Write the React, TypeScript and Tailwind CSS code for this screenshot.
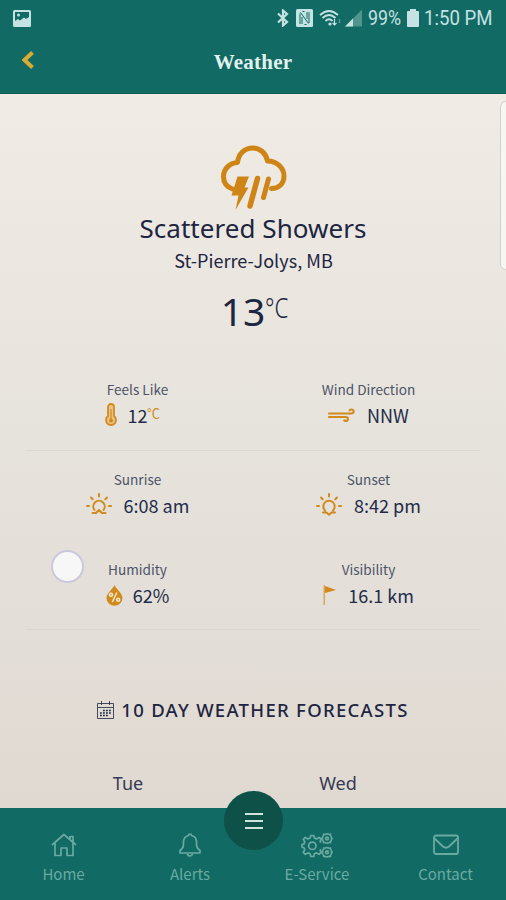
import React from 'react';

const sans = "font-['Noto_Sans_CJK_SC','Noto_Sans',sans-serif]";

interface IconProps {
  className?: string;
}

const StormIcon: React.FC<IconProps> = ({ className }) => (
  <svg viewBox="0 0 68 68" className={className} fill="none" stroke="currentColor" strokeLinecap="round">
    <path d="M12.5 45C7 43 3.5 38.500 3.500 32.500C3.500 25 9.500 19 17.500 18.500C18.500 9.500 25 4 32.500 4C40 4 46 9 47.500 17C56.500 17 64 23.500 64 32C64 40 58.500 44.500 51.500 44.500" strokeWidth="5" strokeLinejoin="round" />
    <path d="M37.500 34.500L30 62" strokeWidth="5.500" />
    <path d="M48.500 35L43.500 53.500" strokeWidth="5" />
    <path d="M17.500 32.500H29L24.500 43.500H28.500L15.500 66L18.500 51.500H11.500Z" fill="currentColor" stroke="none" />
  </svg>
);

const ThermometerIcon = () => (
  <svg viewBox="0 0 14 24" className="h-6 w-3.5" fill="none" stroke="currentColor" strokeWidth="1.8">
    <path d="M4 13V4a3 3 0 0 1 6 0v9a5 5 0 1 1-6 0Z" fill="#e6c48c" />
    <path d="M7 6v10" strokeWidth="1.200" />
    <circle cx="7" cy="17.500" r="2" fill="currentColor" stroke="none" />
  </svg>
);

const WindIcon = () => (
  <svg viewBox="0 0 27 14" className="h-3.5 w-[27px]" fill="none" stroke="currentColor" strokeWidth="2.100" strokeLinecap="round">
    <path d="M1 5.500H23c3.500 0 3.500-4 .500-4-.8 0-1.500.300-1.800.800" />
    <path d="M1 9H17.500c3.500 0 3 4 .500 4-.8 0-1.300-.300-1.700-.6" />
  </svg>
);

const Rays = () => (
  <path d="M13 1v2.500M5 4.500l1.700 1.700M21 4.500l-1.700 1.700M1 13h2M23 13h2" />
);

const SunriseIcon = () => (
  <svg viewBox="0 0 26 24" className="h-6 w-[26px]" fill="none" stroke="currentColor" strokeWidth="2" strokeLinecap="round" strokeLinejoin="round">
    <Rays />
    <path d="M6.500 20H10l3-3 3 3H19.500M8.500 17a5.700 5.700 0 1 1 9 0" />
  </svg>
);

const SunsetIcon = () => (
  <svg viewBox="0 0 26 24" className="h-6 w-[26px]" fill="none" stroke="currentColor" strokeWidth="2" strokeLinecap="round" strokeLinejoin="round">
    <Rays />
    <path d="M7 19.500h3.500l2.500 2.300 2.500-2.300H19M9 17.500a5.700 5.700 0 1 1 8 0" />
  </svg>
);

const HumidityIcon = () => (
  <svg viewBox="0 0 17 21" className="h-[21px] w-[17px]">
    <path d="M8.500 0C7 4 .500 8 .500 13a8 7.700 0 0 0 16 0C16.500 8 10 4 8.500 0Z" fill="currentColor" />
    <g fill="none" stroke="#f3ead8" strokeWidth="1.500">
      <circle cx="5" cy="9.800" r="1.500" />
      <circle cx="12.200" cy="14.800" r="1.500" />
      <path d="M10.800 7.500L6.300 17" />
    </g>
  </svg>
);

const FlagIcon = () => (
  <svg viewBox="0 0 13 20" className="h-5 w-[13px]" fill="currentColor">
    <path d="M2 1l11 4L2 8Z" />
    <path d="M.500 0H2v20H.500Z" opacity=".65" />
  </svg>
);

const CalendarIcon = () => (
  <svg viewBox="0 0 17 18" className="h-[18px] w-[17px]" fill="none" stroke="currentColor" strokeWidth="1">
    <path d="M.500 2.500H16.500V17.500H.500ZM1 6.500h15M4.500 0v4M12.500 0v4" opacity=".8" />
    <path d="M6 9.500h8M3 12h11M3 14.500h8" strokeWidth="1.600" strokeDasharray="1.800 1.200" />
  </svg>
);

const HomeIcon = () => (
  <svg viewBox="0 0 26 26" className="size-[26px]" fill="none" stroke="currentColor" strokeWidth="1.700" strokeLinejoin="round" strokeLinecap="round">
    <path d="M1.500 12.500L13 2.500L24.500 12.500M19 7V4.500H22V9.500M4 11V23.500H10V16H16V23.500H22V11" />
  </svg>
);

const BellIcon = () => (
  <svg viewBox="0 0 26 26" className="size-[26px]" fill="none" stroke="currentColor" strokeWidth="1.700" strokeLinejoin="round">
    <path d="M11.500 3.500a1.500 1.500 0 0 1 3 0C18 4.300 19.500 7 19.500 10.500C19.500 15 20 16.500 23 18.500V21H3V18.500C6 16.500 6.500 15 6.500 10.500C6.500 7 8 4.300 11.500 3.500Z" />
    <path d="M10.500 21.500a2.500 2.500 0 0 0 5 0" />
  </svg>
);

const GearsIcon = () => (
  <svg viewBox="0 0 32 26" className="h-[26px] w-8" fill="none" stroke="currentColor" strokeWidth="1.700" strokeLinejoin="round">
    <path d="M20 17.300l-.9 1 1 2-2 2-2.500-1.400-2.200.900-.600 2.700H9.800l-.700-2.700-2.200-.9-2.600 1.400-2-2 1.500-2.500-.8-2.100-2-.6v-2.600l2-.6.800-2L2.300 7.400 4.300 5.400 6.900 6.900 9.100 6l.7-2.500h3l.600 2.500 2.200.9 2.500-1.500 2 2-1 2 .9 1.100" />
    <circle cx="11.300" cy="13.800" r="3.700" />
    <circle cx="26" cy="6.500" r="4.600" />
    <circle cx="26" cy="6.500" r="1.400" />
    <circle cx="26" cy="20.300" r="4.600" />
    <circle cx="26" cy="20.300" r="1.400" />
    <path d="M20 6.500h1.400M23 2.600l-.8-1M29.200 2.600l.7-1M31.800 6.500h-1.200M23 10.200l-.8 1M29.200 10.200l.7 1M20 20.300h1.400M23 16.500l-.8-1M29.200 16.500l.7-1M31.800 20.300h-1.200M23 24l-.8 1M29.200 24l.7 1" />
  </svg>
);

const MailIcon = () => (
  <svg viewBox="0 0 26 26" className="size-[26px]" fill="none" stroke="currentColor" strokeWidth="1.800" strokeLinejoin="round">
    <rect x="1" y="3.500" width="24" height="18.500" rx="2" />
    <path d="M1.500 6.500L10 14.500Q13 17 16 14.500L24.500 6.500" />
  </svg>
);

const StatusBar = () => (
  <div className="flex h-9 items-center justify-between pr-[13px] pl-[13px] text-[#c5e2e4]">
    <svg viewBox="0 0 18 17" className="h-[17px] w-[18px]">
      <path fillRule="evenodd" fill="currentColor" d="M1.500 0h15A1.500 1.500 0 0 1 18 1.500v14a1.500 1.500 0 0 1-1.500 1.500h-15A1.500 1.500 0 0 1 0 15.500v-14A1.500 1.500 0 0 1 1.500 0ZM2 2v9l3-2 2 1.500 4-3 2 1.500 3-2V2Z" />
      <circle cx="5.500" cy="5" r="1.500" fill="currentColor" />
    </svg>
    <div className="flex items-center">
      <svg viewBox="0 0 12 18" className="h-[18px] w-3" fill="none" stroke="currentColor" strokeWidth="2.200">
        <path d="M1 4.500L10 13L6 16.500V1.500L10 5L1 13.500" />
      </svg>
      <svg viewBox="0 0 17 18" className="ml-[7px] h-[18px] w-[17px]">
        <rect width="17" height="18" rx="1.500" fill="currentColor" />
        <path d="M4 15V4.500M4.500 3.500L12.500 14.500M13 14V3M6.500 2.500H8.500M8.500 15.500H10.500M6 8V15M11 10V3" fill="none" stroke="#116a63" strokeWidth="1" />
      </svg>
      <svg viewBox="0 0 22 18" className="ml-1.5 h-[18px] w-[22px]" fill="none" stroke="currentColor" strokeWidth="1.800">
        <path d="M1 6Q10 -2 19 6M3.500 9Q10 3 16.500 9M6.500 12Q10 8.500 13.500 12" />
        <circle cx="11" cy="15" r="1.600" fill="currentColor" stroke="none" />
        <path d="M15.500 10v6M13.500 14l2 2 2-2" strokeWidth="1.200" />
        <path d="M20.500 10v4" strokeWidth="1.500" opacity=".4" />
      </svg>
      <svg viewBox="0 0 17 18" className="ml-1 h-[18px] w-[17px]" fill="currentColor">
        <path d="M0 17.500L17 0.500V17.500Z" opacity=".35" />
        <path d="M0 17.500L8 9.500V17.500Z" />
      </svg>
      <span className="ml-[6px] w-[35px] origin-left scale-x-[.89] font-[Roboto] text-xl leading-5 whitespace-nowrap">99%</span>
      <svg viewBox="0 0 12 18" className="ml-1 h-[18px] w-3" fill="currentColor">
        <path d="M3 0h6v2h2a1 1 0 0 1 1 1v14a1 1 0 0 1-1 1H1a1 1 0 0 1-1-1V3a1 1 0 0 1 1-1h2Z" />
      </svg>
      <span className="ml-[5px] w-[69px] origin-left scale-x-[.93] font-[Roboto] text-xl leading-5 whitespace-nowrap">1:50 PM</span>
    </div>
  </div>
);

interface StatProps {
  label: string;
  value: React.ReactNode;
  icon: React.ReactNode;
  gap?: string;
}

const Stat: React.FC<StatProps> = ({ label, value, icon, gap = "gap-3" }) => (
  <div className="flex flex-col items-center">
    <div className="-mt-px text-[13.6px] leading-5 text-[#4d5468]">{label}</div>
    <div className={`mt-0.5 flex h-7 items-center ${gap} text-[18px] leading-7 text-[#222b49]`}>
      <span className="text-[#d28a1c]">{icon}</span>
      <span>{value}</span>
    </div>
  </div>
);

const navItems = [
  { label: "Home", icon: <HomeIcon /> },
  { label: "Alerts", icon: <BellIcon /> },
  { label: "E-Service", icon: <GearsIcon /> },
  { label: "Contact", icon: <MailIcon /> },
];

export default function App() {
  return (
    <div className={`relative flex h-[900px] w-[506px] flex-col overflow-hidden bg-[#116a63] ${sans}`}>
      <header className="h-[94px] shrink-0 border-b border-[#0a5a50]">
        <StatusBar />
        <div className="grid h-[54px] grid-cols-[1fr_auto_1fr] items-center">
          <svg viewBox="0 0 12 18" className="ml-[22px] h-[18px] w-3 -translate-y-[3px]" fill="none" stroke="#d8ac32" strokeWidth="4">
            <path d="M10.500 1.500L2.500 9L10.500 16.500" />
          </svg>
          <h1 className="font-['Liberation_Serif',serif] text-[21px] font-bold tracking-[.2px] text-[#e1f1ee]">Weather</h1>
        </div>
      </header>

      <main className="flex h-[714px] shrink-0 flex-col items-center overflow-hidden bg-linear-to-b from-[#f0ebe5] via-[#e6e3dc] to-[#e0d9d2] text-[#1d2541]">
        <StormIcon className="mt-[50px] size-[68px] shrink-0 translate-x-px text-[#cf8515]" />
        <h2 className="font-['Noto_Sans',sans-serif] text-[26px] leading-8 tracking-[.05px] whitespace-nowrap">Scattered Showers</h2>
        <p className="mt-0.5 pl-px text-[18px] leading-7 tracking-[.05px] whitespace-nowrap">St-Pierre-Jolys, MB</p>
        <div className="mt-[9px] ml-1 flex h-14 items-start font-['Noto_Sans',sans-serif] whitespace-nowrap">
          <span className="text-[39px] leading-[56px]">13</span>
          <span className="mt-[7px] w-6 origin-left scale-x-[.82] text-[27px] leading-9 font-light">°C</span>
        </div>

        <section className="mt-[41px] w-[462px]">
          <div className="grid h-[70px] grid-cols-2">
            <Stat
              label="Feels Like"
              icon={<ThermometerIcon />}
              gap="gap-2.5 mr-3"
              value={<>12<sup className="-top-1 inline-block w-3 origin-left scale-x-[.9] text-[14px]! text-[#d28a1c]">°C</sup></>}
            />
            <Stat label="Wind Direction" icon={<WindIcon />} value="NNW" />
          </div>
          <hr className="mx-1 border-[#dcd9d2]" />
          <div className="mt-[19px] grid h-[90px] grid-cols-2">
            <Stat label="Sunrise" icon={<SunriseIcon />} value="6:08 am" />
            <Stat label="Sunset" icon={<SunsetIcon />} value="8:42 pm" />
          </div>
          <div className="grid h-[69px] grid-cols-2">
            <Stat label="Humidity" icon={<HumidityIcon />} value="62%" gap="gap-2.5" />
            <Stat label="Visibility" icon={<FlagIcon />} value="16.1 km" />
          </div>
          <hr className="mx-1 border-[#dad6cb]" />
        </section>

        <h3 className="mt-[66px] flex items-center gap-[7px] font-['Noto_Sans',sans-serif] text-[18.5px] leading-7 font-medium tracking-[1.3px] whitespace-nowrap">
          <CalendarIcon />
          10 DAY WEATHER FORECASTS
        </h3>
        <div className="mt-[45px] ml-[23px] grid w-[420px] grid-cols-2 self-start text-center font-['Noto_Sans',sans-serif] text-[18px] leading-7 text-[#353b54]">
          <span>Tue</span>
          <span>Wed</span>
        </div>
      </main>

      <nav className="-mr-1 grid grow grid-cols-[127px_126px_128px_1fr] text-[#69aaa2]">
        {navItems.map((item) => (
          <a key={item.label} className="flex flex-col items-center pt-6">
            {item.icon}
            <span className="mt-1 text-[15px] leading-6">{item.label}</span>
          </a>
        ))}
      </nav>

      <button className="absolute top-[791px] left-[224px] flex size-[59px] flex-col items-center justify-center gap-[5px] rounded-full bg-[#0d5148]">
        <span className="h-0.5 w-[18px] bg-[#cfe3e0]" />
        <span className="h-0.5 w-[18px] bg-[#cfe3e0]" />
        <span className="h-0.5 w-[18px] bg-[#cfe3e0]" />
      </button>

      {/* touch indicator */}
      <div className="absolute top-[550px] left-[51px] size-[33px] rounded-full border-2 border-[#cbc8dc] bg-[#f8f7f7]" />
      {/* edge panel handle */}
      <div className="absolute top-[101px] -right-2 h-[169px] w-3.5 rounded-md border border-[#d3cfca] bg-[#f8f6f3]" />
    </div>
  );
}
